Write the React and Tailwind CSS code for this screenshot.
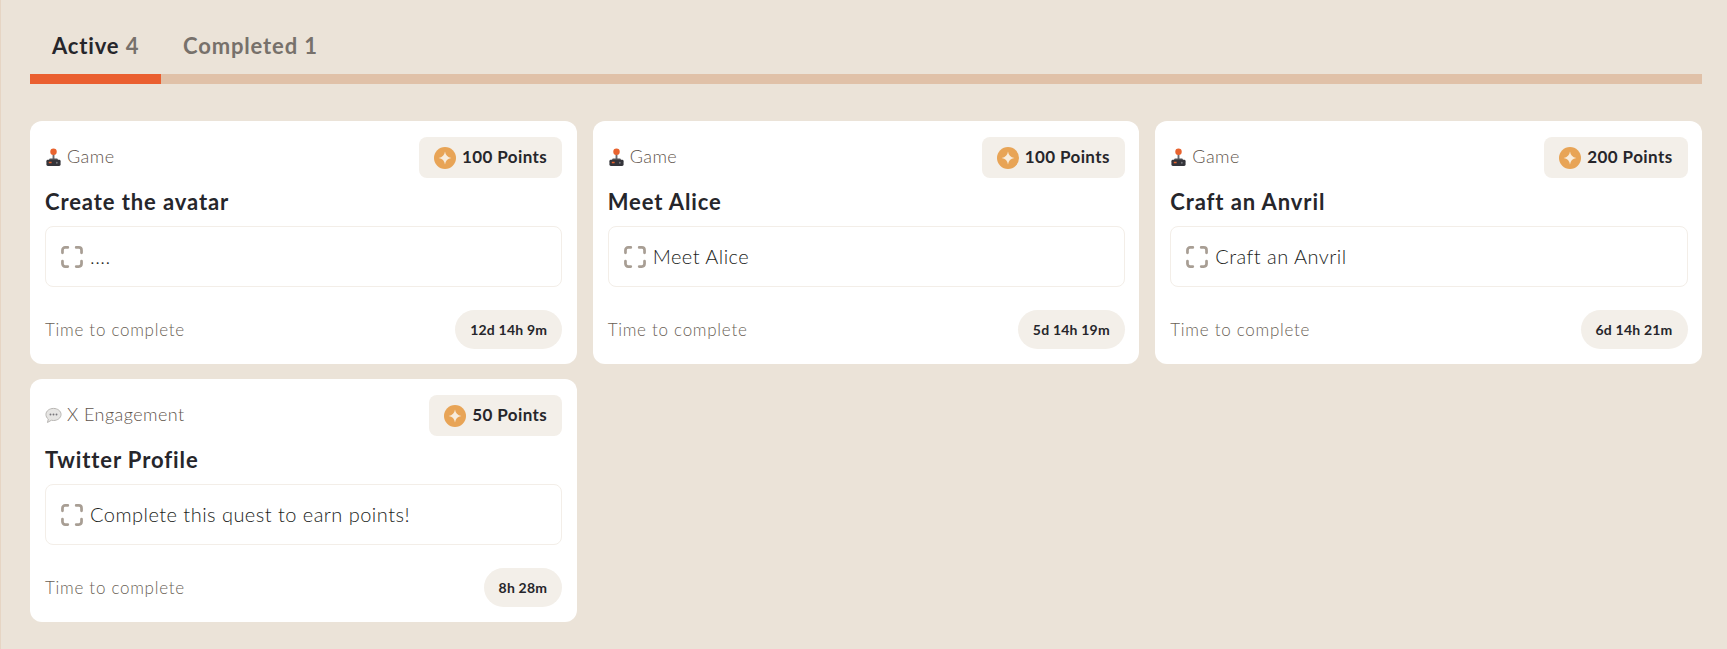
import React from "react";

const quests = [
  { tag: "Game", icon: "game", points: "100 Points", title: "Create the avatar", task: "....", time: "12d 14h 9m" },
  { tag: "Game", icon: "game", points: "100 Points", title: "Meet Alice", task: "Meet Alice", time: "5d 14h 19m" },
  { tag: "Game", icon: "game", points: "200 Points", title: "Craft an Anvril", task: "Craft an Anvril", time: "6d 14h 21m" },
  { tag: "X Engagement", icon: "chat", points: "50 Points", title: "Twitter Profile", task: "Complete this quest to earn points!", time: "8h 28m" },
];

const Joystick = () => (
  <svg viewBox="0 0 18 20" className="h-[19px] w-[17px] shrink-0">
    <rect x="8" y="5" width="2" height="7" fill="#6b6b70" />
    <path d="M5 11h8l1 2H4z" fill="#55555a" />
    <circle cx="9" cy="4" r="3.4" fill="#e8632f" />
    <rect x="1.5" y="12.5" width="15" height="6.5" rx="1.5" fill="#34343a" />
    <rect x="4" y="14.5" width="3" height="1.6" fill="#e8632f" />
    <circle cx="12.5" cy="15.5" r="1" fill="#77777c" />
  </svg>
);

const Bubble = () => (
  <svg viewBox="0 0 18 18" className="h-[17px] w-[17px] shrink-0">
    <path d="M9 1.5c4.4 0 8 2.8 8 6.4s-3.6 6.4-8 6.4c-.8 0-1.5-.1-2.2-.3L2.6 16.4l.9-3.6C1.9 11.6 1 9.9 1 7.9 1 4.3 4.6 1.5 9 1.5z" fill="#e6e5e3" stroke="#b5b3af" strokeWidth="1" />
    <circle cx="5.8" cy="8" r="1" fill="#77757a" />
    <circle cx="9" cy="8" r="1" fill="#77757a" />
    <circle cx="12.2" cy="8" r="1" fill="#77757a" />
  </svg>
);

const Coin = () => (
  <svg viewBox="0 0 20 20" className="h-[22px] w-[22px] shrink-0">
    <circle cx="10" cy="10" r="10" fill="#e8a456" />
    <path d="M10 4.2c.5 3.4 2.3 5.2 5.8 5.8-3.5.6-5.3 2.4-5.8 5.8-.5-3.4-2.3-5.2-5.8-5.8 3.5-.6 5.3-2.4 5.8-5.8z" fill="#f8ecdc" />
  </svg>
);

const Brackets = () => (
  <svg viewBox="0 0 21 21" fill="none" stroke="#a89e94" strokeWidth="2.6" strokeLinecap="round" className="h-[22px] w-[22px] shrink-0">
    <path d="M1.4 6.5V4A2.6 2.6 0 0 1 4 1.4h2.5" />
    <path d="M14.5 1.4H17A2.6 2.6 0 0 1 19.6 4v2.5" />
    <path d="M19.6 14.5V17a2.6 2.6 0 0 1-2.6 2.6h-2.5" />
    <path d="M6.5 19.6H4A2.6 2.6 0 0 1 1.4 17v-2.5" />
  </svg>
);

const QuestCard = ({ quest }) => (
  <div className="flex h-[243px] flex-col rounded-xl bg-white pb-[15px] pl-[15px] pr-[14.5px] pt-4">
    <div className="flex items-center justify-between">
      <div className="flex items-center gap-[5px] text-[18px] font-light tracking-[0.45px] text-[#5f554d]">
        {quest.icon === "game" ? <Joystick /> : <Bubble />}
        <span className="-translate-y-px">{quest.tag}</span>
      </div>
      <div className="flex h-[41px] items-center gap-[6px] rounded-lg bg-[#f3efe9] px-[15px] text-[17px] font-bold tracking-[0.4px] text-[#26262b]">
        <Coin />
        <span className="-translate-y-px">{quest.points}</span>
      </div>
    </div>
    <h3 className="flex h-[48px] items-center pb-[2px] text-[22px] font-bold tracking-[0.9px] text-[#26262b]">{quest.title}</h3>
    <div className="flex h-[61px] items-center gap-[7px] rounded-lg border border-[#f3eee8] px-[15px] text-[20px] font-light tracking-[0.47px] text-[#221e1b]">
      <Brackets />
      <span className="-translate-y-px">{quest.task}</span>
    </div>
    <div className="mt-auto flex items-center justify-between">
      <span className="text-[17px] font-light tracking-[0.72px] text-[#6a5f56]">Time to complete</span>
      <span className="flex h-[39px] items-center rounded-full bg-[#f3efe9] px-[15px] text-[14px] font-bold tracking-[0.2px] text-[#26262b]">{quest.time}</span>
    </div>
  </div>
);

export default function App() {
  return (
    <div className="min-h-[649px] border-l border-[#e6d5c4] bg-[#ebe3d8] pb-[27px] pl-[29px] pr-[25px] pt-[18px] font-['Lato',sans-serif]">
      <div className="flex h-[56px] items-center pb-[2px] text-[22px] font-bold tracking-[0.85px]">
        <div className="w-[131px] whitespace-nowrap px-[22px] text-[#26262b]">
          Active <span className="text-[#77716b]">4</span>
        </div>
        <div className="px-[22px] text-[#77716b]">Completed 1</div>
      </div>
      <div className="h-[10px] bg-[#e0c1a8]">
        <div className="h-full w-[131px] bg-[#ea5f30]" />
      </div>
      <div className="mt-[37px] grid grid-cols-3 gap-x-4 gap-y-[15px]">
        {quests.map((quest) => (
          <QuestCard key={quest.title} quest={quest} />
        ))}
      </div>
    </div>
  );
}
